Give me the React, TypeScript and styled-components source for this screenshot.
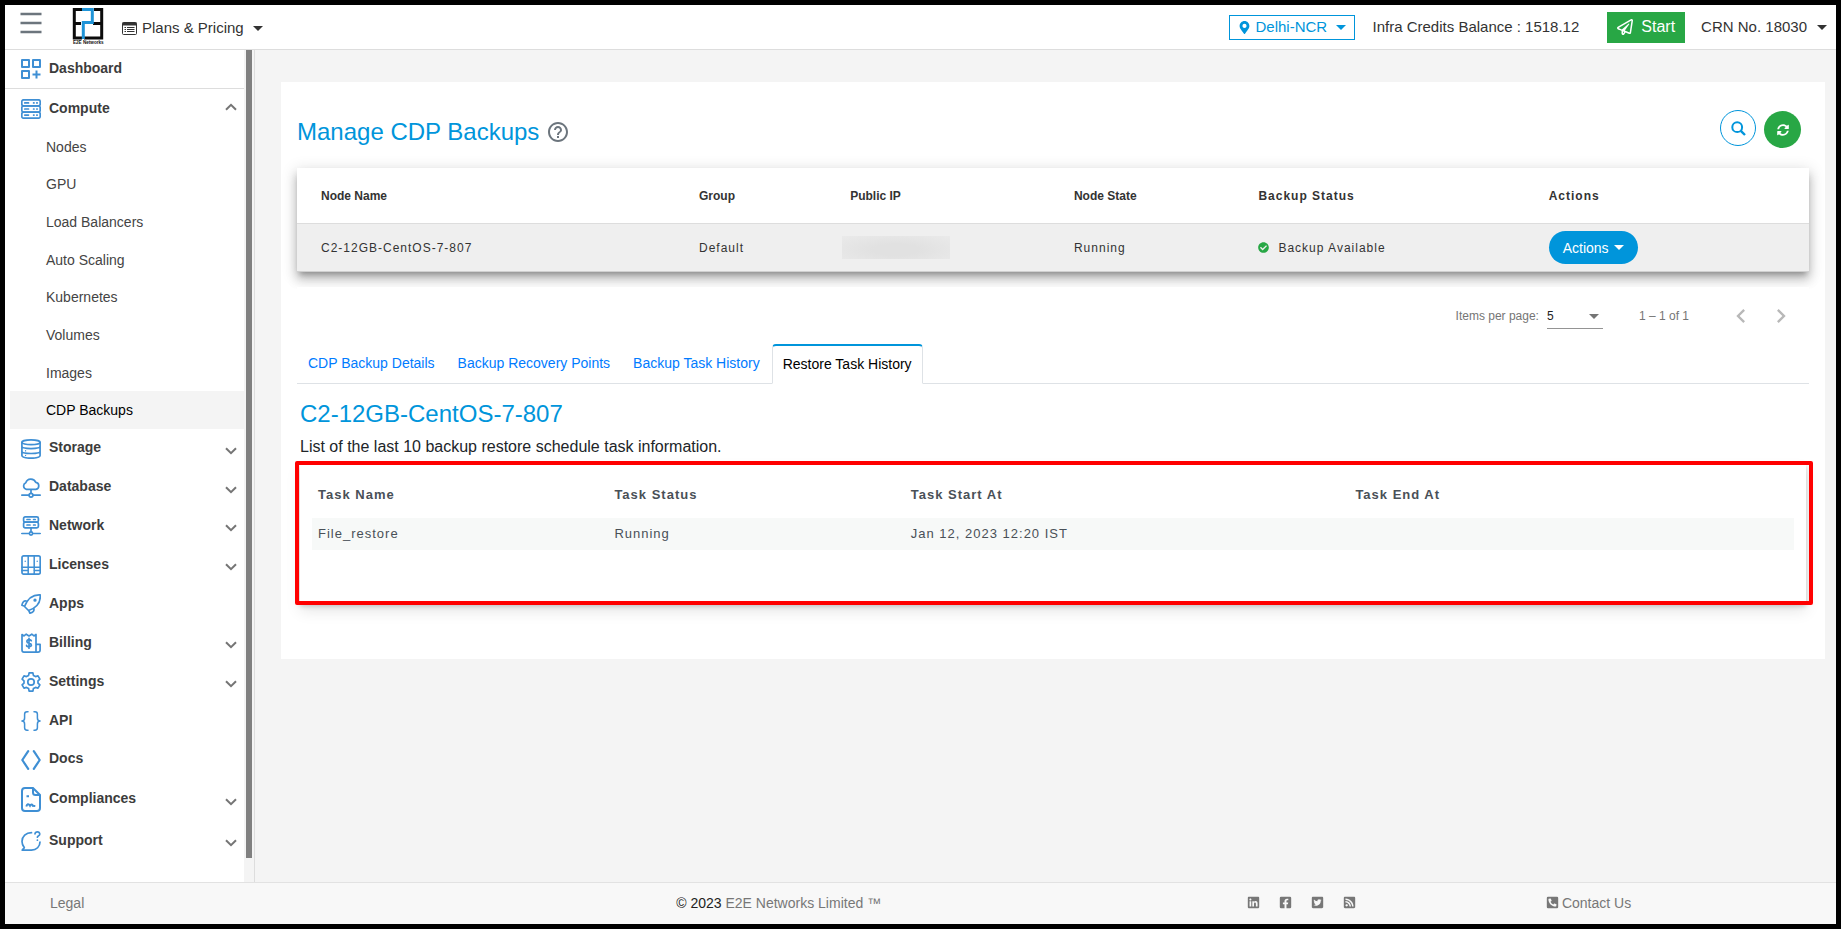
import React from 'react';
import styled, { createGlobalStyle, css } from 'styled-components';
import {
  FaCheckCircle,
  FaFacebookSquare,
  FaLinkedin,
  FaMapMarkerAlt,
  FaPhoneSquareAlt,
  FaRegPaperPlane,
  FaRssSquare,
  FaSyncAlt,
  FaTwitterSquare,
} from 'react-icons/fa';
import { MdChevronLeft, MdChevronRight, MdHelpOutline } from 'react-icons/md';

const color = {
  brand: '#0095db',
  link: '#007bff',
  green: '#28a745',
  icon: '#3f8fd4',
  text: '#333333',
  strong: '#3c3c3c',
  muted: '#777777',
  line: '#dddddd',
  page: '#f4f4f4',
};

const GlobalStyle = createGlobalStyle`
  *, *::before, *::after { box-sizing: border-box; }
  body {
    margin: 0;
    background: #000;
    color: ${color.text};
    font-family: "Liberation Sans", Arial, sans-serif;
    font-size: 14px;
    line-height: 20px;
  }
  button, select { font: inherit; color: inherit; margin: 0; cursor: pointer; }
  a { color: inherit; text-decoration: none; }
  h1, h2, p, ul { margin: 0; padding: 0; }
  ul { list-style: none; }
  svg { display: block; flex: none; }
`;

const Frame = styled.div`
  display: flex;
  flex-direction: column;
  min-height: 100vh;
  border: 5px solid #000;
  background: #fff;
`;

/* ---------- top bar ---------- */

const TopBar = styled.header`
  display: flex;
  align-items: center;
  justify-content: space-between;
  height: 45px;
  padding: 0 9px 0 15px;
  border-bottom: 1px solid ${color.line};
  font-size: 15px;
`;

const TopGroup = styled.div`
  display: flex;
  align-items: center;
`;

const PlainButton = styled.button`
  display: flex;
  align-items: center;
  gap: 10px;
  padding: 0;
  border: 0;
  background: none;
  white-space: nowrap;
`;

const MenuButton = styled(PlainButton)`
  margin: 0 30px 9px 0;
`;

const PlansButton = styled(PlainButton)`
  gap: 5px;
  margin: 2px 0 0 14px;
`;

const Caret = styled.span`
  width: 0;
  height: 0;
  margin-left: auto;
  border: 5px solid transparent;
  border-top-color: currentColor;
  border-bottom: 0;
`;

const SpacedCaret = styled(Caret)`
  margin-left: 4px;
`;

const RegionButton = styled(PlainButton)`
  gap: 5px;
  width: 126px;
  height: 25px;
  padding: 0 8px;
  border: 1px solid ${color.brand};
  color: ${color.brand};
`;

const Balance = styled.span`
  margin: 0 28px 0 18px;
`;

const StartButton = styled(PlainButton)`
  gap: 8px;
  height: 31px;
  margin-right: 16px;
  padding: 0 10px;
  background: ${color.green};
  color: #fff;
  font-size: 16px;
`;

/* ---------- side bar ---------- */

const Body = styled.div`
  display: flex;
  flex: 1;
`;

const Sidebar = styled.aside`
  display: flex;
  flex: none;
  width: 250px;
  border-right: 1px solid ${color.line};
`;

const Nav = styled.nav`
  flex: 1;
`;

const ScrollTrack = styled.div`
  width: 10px;
  padding: 0 2px 24px;
  background: ${color.page};
`;

const ScrollThumb = styled.div`
  height: 100%;
  background: #808080;
`;

const NavRow = styled.a<{ $height: number; $ruled?: boolean }>`
  display: flex;
  align-items: center;
  gap: 8px;
  height: ${(p) => p.$height}px;
  padding: 1px 7px 0 16px;
  color: ${color.strong};
  font-weight: bold;
  ${(p) =>
    p.$ruled &&
    css`
      padding-top: 0;
      border-bottom: 1px solid ${color.line};
    `}
`;

const NavLabel = styled.span<{ $low?: boolean }>`
  flex: 1;
  padding-bottom: ${(p) => (p.$low ? 2 : 4)}px;
`;

const ChevronSlot = styled.span<{ $open?: boolean }>`
  padding: ${(p) => (p.$open ? '0 0 5px' : '4px 0 0')};
`;

const SubNav = styled.ul`
  display: grid;
  grid-auto-rows: 1fr;
  height: 301px;
  padding-left: 5px;
`;

const SubLink = styled.a<{ $active?: boolean }>`
  display: flex;
  align-items: center;
  height: 100%;
  padding-left: 36px;
  background: ${(p) => (p.$active ? color.page : 'none')};
  color: ${(p) => (p.$active ? '#000' : '#444')};
`;

/* ---------- content ---------- */

const Main = styled.main`
  flex: 1;
  min-width: 0;
  padding: 32px 11px 32px 26px;
  background: ${color.page};
`;

const Panel = styled.section`
  padding: 28px 16px 56px;
  background: #fff;
`;

const TitleRow = styled.div`
  display: flex;
  align-items: flex-start;
  justify-content: space-between;
  height: 58px;
  padding-right: 8px;
`;

const Title = styled.h1`
  display: flex;
  align-items: center;
  gap: 7px;
  color: ${color.brand};
  font-size: 24px;
  font-weight: normal;
  line-height: 44px;

  svg { color: #6c757d; }
`;

const RoundButtons = styled.div`
  display: flex;
  align-items: flex-start;
  gap: 8px;
`;

const RoundButton = styled.button<{ $filled?: boolean }>`
  display: flex;
  align-items: center;
  justify-content: center;
  width: ${(p) => (p.$filled ? 37 : 36)}px;
  height: ${(p) => (p.$filled ? 37 : 36)}px;
  margin-top: ${(p) => (p.$filled ? 1 : 0)}px;
  padding: 0;
  border: ${(p) => (p.$filled ? '0' : `1px solid ${color.brand}`)};
  border-radius: 50%;
  background: ${(p) => (p.$filled ? color.green : '#fff')};
  color: ${(p) => (p.$filled ? '#fff' : color.brand)};
`;

const NodeTable = styled.table`
  width: 100%;
  table-layout: fixed;
  border-collapse: separate;
  border-spacing: 0;
  background: #fff;
  font-size: 12px;
  box-shadow: 0 5px 5px -3px rgba(0, 0, 0, 0.2), 0 8px 10px 1px rgba(0, 0, 0, 0.14),
    0 3px 14px 2px rgba(0, 0, 0, 0.12), 0 5px 8px -2px rgba(0, 0, 0, 0.12);

  th, td {
    padding: 0 0 0 24px;
    border-bottom: 1px solid ${color.line};
    text-align: left;
  }
  th { height: 56px; }
  td {
    height: 48px;
    border-bottom-color: #d0d0d0;
    background: #efefef;
    letter-spacing: 1px;
  }
`;

const Th = styled.th<{ $spaced?: boolean }>`
  letter-spacing: ${(p) => (p.$spaced ? '1px' : 'normal')};
`;

const HiddenAddress = styled.div`
  width: 108px;
  height: 23px;
  margin-left: -8px;
  background: radial-gradient(ellipse at 50% 60%, #e1e1e1 30%, #eaeaea 100%);
`;

const StatusCell = styled.div`
  display: flex;
  align-items: center;
  gap: 9px;

  svg { color: ${color.green}; }
`;

const ActionsButton = styled(PlainButton)`
  gap: 5px;
  height: 33px;
  padding: 0 14px;
  border-radius: 17px;
  background: ${color.brand};
  color: #fff;
  font-size: 14px;
  letter-spacing: normal;
`;

const Paginator = styled.div`
  position: relative;
  display: flex;
  align-items: center;
  justify-content: flex-end;
  height: 57px;
  margin-top: 15px;
  padding-right: 14px;
  background: #fff;
  color: #757575;
  font-size: 12px;
`;

const PageSize = styled.label`
  display: flex;
  align-items: center;
  gap: 8px;
`;

const SelectBox = styled.span`
  display: flex;
  align-items: center;
  width: 56px;
  height: 25px;
  margin-top: 2px;
  border-bottom: 1px solid #949494;
`;

const Select = styled.select`
  flex: 1;
  padding: 0;
  border: 0;
  appearance: none;
  background: none;
  color: #222;
`;

const SelectCaret = styled(Caret)`
  margin-right: 4px;
  pointer-events: none;
`;

const Range = styled.span`
  margin: 0 38px 0 36px;
`;

const PageButton = styled(PlainButton)`
  width: 28px;
  margin-right: 12px;
  color: #b8b8b8;

  &:last-child { margin-right: 0; }
`;

const Tabs = styled.div`
  display: flex;
  gap: 1px;
  height: 40px;
  border-bottom: 1px solid #dee2e6;
`;

const Tab = styled.button<{ $active?: boolean }>`
  height: 40px;
  padding: 0 10px 2px;
  border: 1px solid transparent;
  background: none;
  color: ${color.link};
  white-space: nowrap;
  ${(p) =>
    p.$active &&
    css`
      padding-bottom: 1px;
      border-color: #dee2e6;
      border-top: 2px solid ${color.brand};
      border-bottom-color: #fff;
      border-radius: 4px 4px 0 0;
      background: #fff;
      color: #000;
    `}
`;

const TabPanel = styled.div`
  padding: 14px 3px 0;
`;

const NodeHeading = styled.h2`
  color: ${color.brand};
  font-size: 24px;
  font-weight: normal;
  line-height: 32px;
`;

const Intro = styled.p`
  margin: 4px 0;
  color: #212529;
  font-size: 16px;
  line-height: 25px;
`;

const TaskCard = styled.div`
  position: relative;
  min-height: 140px;
  padding: 8px 12px;
  box-shadow: 0 3px 5px rgba(0, 0, 0, 0.2), 0 8px 14px rgba(0, 0, 0, 0.1);
`;

const Highlight = styled.div`
  position: absolute;
  inset: -2px -7px -2px -5px;
  border: 4px solid #ff0000;
  border-radius: 2px;
  pointer-events: none;
`;

const TaskTable = styled.table`
  width: 100%;
  table-layout: fixed;
  border-collapse: collapse;
  color: #495057;
  font-size: 13px;
  letter-spacing: 1px;

  th, td { padding: 0 6px; text-align: left; }
  th { height: 47px; }
  td { height: 32px; background: #f7f9f8; }
`;

/* ---------- footer ---------- */

const Footer = styled.footer`
  display: grid;
  grid-template-columns: 34% 31% 299px auto;
  align-items: center;
  height: 42px;
  padding: 0 0 2px 45px;
  border-top: 1px solid #e2e2e2;
  background: #f8f8f8;
  color: ${color.muted};

  b { color: #222; font-weight: normal; }
`;

const FooterCell = styled.span`
  padding-left: 19px;
`;

const Social = styled.div`
  display: flex;
  gap: 19px;
  padding-left: 36px;
`;

const Contact = styled.a`
  display: flex;
  align-items: center;
  gap: 3px;
  padding-left: 36px;
`;

/* ---------- drawings ---------- */

const Logo = () => (
  <svg width="36" height="40" viewBox="0 0 36 40" role="img" aria-label="E2E Networks">
    <g fill="none" strokeWidth="3">
      <path d="M10 2.5H2.3V31H10M2 16.5H9M22 2.5H29.7V31H12M30 16.5H21" stroke="#0b0b0b" />
      <path d="M10 2.5H20.3V15.5H11.3V32" stroke="#1e94d8" />
    </g>
    <text x="1" y="37" fontSize="4.6" fontWeight="bold" fill="#111">
      E2E Networks
    </text>
  </svg>
);

const Hamburger = () => (
  <svg width="22" height="22" viewBox="0 0 22 22" stroke="#6c757d" strokeWidth="2.6">
    <path d="M0.5 2H21.5M0.5 11H21.5M0.5 20H21.5" />
  </svg>
);

const PlansIcon = () => (
  <svg width="15" height="13" viewBox="0 0 15 13" fill="none" stroke="#333">
    <rect x="0.5" y="0.5" width="14" height="12" rx="1" />
    <path d="M0.5 2H14.5" strokeWidth="3" />
    <path d="M2.5 5.5H4M5 5.5H12.5M2.5 7.5H4M5 7.5H12.5M2.5 9.5H4M5 9.5H12.5" />
  </svg>
);

const SearchIcon = () => (
  <svg width="15" height="15" viewBox="0 0 15 15" fill="none" stroke="currentColor" strokeWidth="2">
    <circle cx="6.2" cy="6.2" r="4.9" />
    <path d="M9.8 9.8L14 14" strokeWidth="2.4" />
  </svg>
);

const Chevron = ({ open }: { open?: boolean }) => (
  <ChevronSlot $open={open}>
    <svg width="12" height="8" viewBox="0 0 12 8" fill="none" stroke="#757575" strokeWidth="2">
      <path d={open ? 'M1 6.8L6 1.8L11 6.8' : 'M1 1.2L6 6.2L11 1.2'} />
    </svg>
  </ChevronSlot>
);

const glyphs: Record<string, React.ReactNode> = {
  Dashboard: (
    <path
      d="M1 1H8V8H1ZM12 1H19V8H12ZM1 12H8V19H1ZM15.5 11.5V19.5M11.5 15.5H19.5"
      strokeWidth="2"
    />
  ),
  Compute: (
    <>
      <rect x="0.8" y="0.8" width="18.4" height="6.1" rx="1.8" />
      <rect x="0.8" y="6.9" width="18.4" height="6.2" rx="1.8" />
      <rect x="0.8" y="13.1" width="18.4" height="6.1" rx="1.8" />
      <path d="M3.8 3.9H7.5M3.8 10H7.5M3.8 16.1H7.5M12.6 3.9H13M15.8 3.9H16.2M12.6 10H13M15.8 10H16.2M12.6 16.1H13M15.8 16.1H16.2" />
    </>
  ),
  Storage: (
    <>
      <ellipse cx="10" cy="3.3" rx="9.1" ry="2.4" />
      <path d="M0.9 3.3V16.6C0.9 18.2 5 19.2 10 19.2S19.1 18.2 19.1 16.6V3.3M0.9 7.3C0.9 8.8 5 9.6 10 9.6S19.1 8.8 19.1 7.3M0.9 12.2C0.9 13.6 5 14.5 10 14.5S19.1 13.6 19.1 12.2" />
      <path d="M4.6 11.7V11.9M4.6 16.3V16.5" strokeWidth="1.2" />
    </>
  ),
  Database: (
    <>
      <path d="M5.4 11.3A3.4 3.4 0 0 1 4.8 4.8A5.3 5.3 0 0 1 14.8 4.4A3.5 3.5 0 0 1 14.9 11.3ZM10 11.3V15.3M0.8 17.2H8M12 17.2H19.2" />
      <circle cx="10" cy="17.2" r="1.9" />
    </>
  ),
  Network: (
    <>
      <rect x="2.6" y="0.9" width="14.8" height="5.3" rx="1.6" />
      <rect x="2.6" y="6.2" width="14.8" height="5.6" rx="1.6" />
      <path d="M6 3.5H9M12.6 3.5H14.2M6 9H9M12.6 9H14.2M10 11.8V15.6M0.8 17.5H8M12 17.5H19.2" />
      <circle cx="10" cy="17.5" r="1.6" />
    </>
  ),
  Licenses: (
    <>
      <rect x="1" y="0.9" width="18.2" height="18.2" rx="1.6" />
      <path d="M7.2 1V19M13.2 1V19M1 12.2H19M1 15.5H7M13 15.5H19" strokeWidth="1.5" />
      <path d="M4.2 6V6.4M16.2 6V6.4" strokeWidth="1.2" />
    </>
  ),
  Apps: (
    <>
      <path d="M19.2 0.9C12 0.5 7 3.5 3.5 12.5L7.5 16.5C16 13.5 19.8 8 19.2 0.9ZM6 7.2C3 6.2 1.5 8 0.9 11.2L3.6 12.2M12.8 14.2C13.5 17 12 18.5 8.9 19.2L7.8 16.6" />
      <circle cx="14" cy="6.2" r="0.8" />
    </>
  ),
  Billing: (
    <>
      <path d="M1 1.5L3 2.9L5.2 1.2L8 2.9L10.8 1.2L13 2.9L15 1.5V19.1H3Q1 19.1 1 17ZM15 11.3H19.1V17Q19.1 19.1 17 19.1H14" />
      <path d="M10.3 7.8Q10 6.7 8 6.7T5.9 8.4Q5.9 9.8 8 10.1T10.4 12.1Q10.4 13.7 8 13.7T5.6 12.4M8 5.3V15.2" />
    </>
  ),
  Settings: (
    <>
      <path d="M7.6 3.4L8.1 0.9H11.9L12.4 3.4L14.6 4.6L17 3.8L18.9 7.1L17 8.8V11.2L18.9 12.9L17 16.2L14.6 15.4L12.4 16.6L11.9 19.1H8.1L7.6 16.6L5.4 15.4L3 16.2L1.1 12.9L3 11.2V8.8L1.1 7.1L3 3.8L5.4 4.6Z" />
      <circle cx="10" cy="10" r="3.2" />
    </>
  ),
  API: (
    <path
      d="M7 0.8H6Q3.6 0.8 3.6 3.2V7Q3.6 10 0.9 10Q3.6 10 3.6 13V16.8Q3.6 19.2 6 19.2H7M13 0.8H14Q16.4 0.8 16.4 3.2V7Q16.4 10 19.1 10Q16.4 10 16.4 13V16.8Q16.4 19.2 14 19.2H13"
      strokeWidth="1.5"
    />
  ),
  Docs: <path d="M7.2 1.2L1.3 10L7.2 18.8M12.8 1.2L18.7 10L12.8 18.8" strokeWidth="2.2" />,
  Support: (
    <>
      <path d="M10.5 1.7C5 1.7 1 5.5 1 10.5C1 13 2 15 3.3 16.6L1.2 19.1H10.5C15.5 19.1 19 15.5 19 11" />
      <path d="M14 2.8Q14.3 0.9 16.4 0.9T18.8 3.1Q18.8 4.4 17.4 5Q16.4 5.5 16.4 6.2M16.4 9V9.2" />
    </>
  ),
};

const NavIcon = ({ name }: { name: string }) =>
  name === 'Compliances' ? (
    <svg width="20" height="25" viewBox="0 0 20 25" fill="none" stroke={color.icon} strokeWidth="2">
      <path d="M4 1H12L19 8V21Q19 24 16 24H4Q1 24 1 21V4Q1 1 4 1ZM12 1V5.5Q12 8 14.5 8H19" />
      <path d="M5.5 9.2H8M5.3 19.5C6 17 7.5 16.3 9 18.8C10 17 11.5 17.3 11.8 18.8L14.3 19" />
    </svg>
  ) : (
    <svg
      width="20"
      height="20"
      viewBox="0 0 20 20"
      fill="none"
      stroke={color.icon}
      strokeWidth="1.7"
      strokeLinecap={name === 'Dashboard' ? 'butt' : 'round'}
      strokeLinejoin="round"
    >
      {glyphs[name]}
    </svg>
  );

/* ---------- data ---------- */

const computeLinks = [
  'Nodes',
  'GPU',
  'Load Balancers',
  'Auto Scaling',
  'Kubernetes',
  'Volumes',
  'Images',
  'CDP Backups',
];

const sections = [
  { name: 'Storage', expandable: true, low: false, height: 39 },
  { name: 'Database', expandable: true, low: false, height: 38 },
  { name: 'Network', expandable: true, low: true, height: 39 },
  { name: 'Licenses', expandable: true, low: true, height: 39 },
  { name: 'Apps', expandable: false, low: true, height: 39 },
  { name: 'Billing', expandable: true, low: true, height: 39 },
  { name: 'Settings', expandable: true, low: true, height: 39 },
  { name: 'API', expandable: false, low: true, height: 39 },
  { name: 'Docs', expandable: false, low: false, height: 39 },
  { name: 'Compliances', expandable: true, low: false, height: 40 },
  { name: 'Support', expandable: true, low: true, height: 43 },
];

const tabs = [
  'CDP Backup Details',
  'Backup Recovery Points',
  'Backup Task History',
  'Restore Task History',
];

export default function App() {
  return (
    <>
      <GlobalStyle />
      <Frame>
        <TopBar>
          <TopGroup>
            <MenuButton aria-label="Toggle menu">
              <Hamburger />
            </MenuButton>
            <Logo />
            <PlansButton>
              <PlansIcon />
              Plans &amp; Pricing
              <SpacedCaret />
            </PlansButton>
          </TopGroup>
          <TopGroup>
            <RegionButton>
              <FaMapMarkerAlt size={13} />
              Delhi-NCR
              <Caret />
            </RegionButton>
            <Balance>Infra Credits Balance : 1518.12</Balance>
            <StartButton>
              <FaRegPaperPlane size={16} />
              Start
            </StartButton>
            <PlainButton>
              CRN No. 18030
              <Caret />
            </PlainButton>
          </TopGroup>
        </TopBar>

        <Body>
          <Sidebar>
            <Nav>
              <NavRow href="#dashboard" $height={39} $ruled>
                <NavIcon name="Dashboard" />
                <NavLabel $low>Dashboard</NavLabel>
              </NavRow>
              <NavRow href="#compute" $height={39}>
                <NavIcon name="Compute" />
                <NavLabel $low>Compute</NavLabel>
                <Chevron open />
              </NavRow>
              <SubNav>
                {computeLinks.map((name) => (
                  <li key={name}>
                    <SubLink href="#compute" $active={name === 'CDP Backups'}>
                      {name}
                    </SubLink>
                  </li>
                ))}
              </SubNav>
              {sections.map((s) => (
                <NavRow key={s.name} href={`#${s.name.toLowerCase()}`} $height={s.height}>
                  <NavIcon name={s.name} />
                  <NavLabel $low={s.low}>{s.name}</NavLabel>
                  {s.expandable && <Chevron />}
                </NavRow>
              ))}
            </Nav>
            <ScrollTrack>
              <ScrollThumb />
            </ScrollTrack>
          </Sidebar>

          <Main>
            <Panel>
              <TitleRow>
                <Title>
                  Manage CDP Backups
                  <MdHelpOutline size={24} />
                </Title>
                <RoundButtons>
                  <RoundButton aria-label="Search">
                    <SearchIcon />
                  </RoundButton>
                  <RoundButton aria-label="Refresh" $filled>
                    <FaSyncAlt size={12} />
                  </RoundButton>
                </RoundButtons>
              </TitleRow>

              <NodeTable>
                <colgroup>
                  <col width="25%" />
                  <col width="10%" />
                  <col width="14.8%" />
                  <col width="12.2%" />
                  <col width="19.2%" />
                  <col />
                </colgroup>
                <thead>
                  <tr>
                    <Th>Node Name</Th>
                    <Th>Group</Th>
                    <Th>Public IP</Th>
                    <Th>Node State</Th>
                    <Th $spaced>Backup Status</Th>
                    <Th $spaced>Actions</Th>
                  </tr>
                </thead>
                <tbody>
                  <tr>
                    <td>C2-12GB-CentOS-7-807</td>
                    <td>Default</td>
                    <td>
                      <HiddenAddress />
                    </td>
                    <td>Running</td>
                    <td>
                      <StatusCell>
                        <FaCheckCircle size={11} />
                        Backup Available
                      </StatusCell>
                    </td>
                    <td>
                      <ActionsButton>
                        Actions
                        <Caret />
                      </ActionsButton>
                    </td>
                  </tr>
                </tbody>
              </NodeTable>

              <Paginator>
                <PageSize>
                  Items per page:
                  <SelectBox>
                    <Select defaultValue="5">
                      <option>5</option>
                      <option>10</option>
                    </Select>
                    <SelectCaret />
                  </SelectBox>
                </PageSize>
                <Range>1 – 1 of 1</Range>
                <PageButton aria-label="Previous page">
                  <MdChevronLeft size={28} />
                </PageButton>
                <PageButton aria-label="Next page">
                  <MdChevronRight size={28} />
                </PageButton>
              </Paginator>

              <Tabs role="tablist">
                {tabs.map((name) => {
                  const active = name === 'Restore Task History';
                  return (
                    <Tab key={name} role="tab" aria-selected={active} $active={active}>
                      {name}
                    </Tab>
                  );
                })}
              </Tabs>

              <TabPanel role="tabpanel">
                <NodeHeading>C2-12GB-CentOS-7-807</NodeHeading>
                <Intro>List of the last 10 backup restore schedule task information.</Intro>
                <TaskCard>
                  <TaskTable>
                    <colgroup>
                      <col width="20%" />
                      <col width="20%" />
                      <col width="30%" />
                      <col width="30%" />
                    </colgroup>
                    <thead>
                      <tr>
                        <th>Task Name</th>
                        <th>Task Status</th>
                        <th>Task Start At</th>
                        <th>Task End At</th>
                      </tr>
                    </thead>
                    <tbody>
                      <tr>
                        <td>File_restore</td>
                        <td>Running</td>
                        <td>Jan 12, 2023 12:20 IST</td>
                        <td />
                      </tr>
                    </tbody>
                  </TaskTable>
                  <Highlight />
                </TaskCard>
              </TabPanel>
            </Panel>
          </Main>
        </Body>

        <Footer>
          <a href="#legal">Legal</a>
          <FooterCell>
            <b>© 2023</b> E2E Networks Limited ™
          </FooterCell>
          <Social>
            <a href="#linkedin" aria-label="LinkedIn"><FaLinkedin size={13} /></a>
            <a href="#facebook" aria-label="Facebook"><FaFacebookSquare size={13} /></a>
            <a href="#twitter" aria-label="Twitter"><FaTwitterSquare size={13} /></a>
            <a href="#rss" aria-label="RSS"><FaRssSquare size={13} /></a>
          </Social>
          <Contact href="#contact">
            <FaPhoneSquareAlt size={13} />
            Contact Us
          </Contact>
        </Footer>
      </Frame>
    </>
  );
}
